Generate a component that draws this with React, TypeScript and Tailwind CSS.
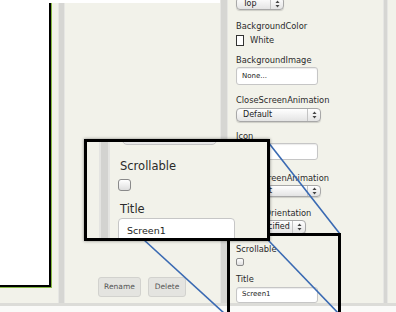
import React from "react";

const FONT = { fontFamily: '"DejaVu Sans", "Liberation Sans", sans-serif' };

function Arrows({ h = 8 }: { h?: number }) {
  return (
    <svg width="5" height={h} viewBox="0 0 5 8">
      <path d="M2.5 0.5 L4.5 3 L0.5 3 Z" fill="#444" />
      <path d="M2.5 7.5 L4.5 5 L0.5 5 Z" fill="#444" />
    </svg>
  );
}

function Dropdown({ w, label, h = 14, cls = "" }: { w: number; label: string; h?: number; cls?: string }) {
  return (
    <div
      className={`flex items-stretch rounded-[4px] border border-[#a8a8a8] bg-gradient-to-b from-white to-[#e4e4e4] shadow-[0_1px_1px_rgba(0,0,0,0.15)] ${cls}`}
      style={{ width: w, height: h }}
    >
      <div className="flex flex-1 items-center pl-[6px] text-[8px] leading-none text-[#222]">{label}</div>
      <div className="flex w-[13px] items-center justify-center border-l border-[#c4c4c4]">
        <Arrows />
      </div>
    </div>
  );
}

function Input({ text, h = 19, cls = "" }: { text: string; h?: number; cls?: string }) {
  return (
    <div
      className={`flex w-[82px] items-center rounded-[3px] border border-[#c6c6c6] bg-white pl-[5px] text-[7px] leading-none text-[#222] shadow-[inset_0_1px_1px_rgba(0,0,0,0.08)] ${cls}`}
      style={{ height: h }}
    >
      {text}
    </div>
  );
}

function Label({ children, cls = "" }: { children: React.ReactNode; cls?: string }) {
  return <div className={`h-[10px] text-[8.3px] leading-[10px] text-[#2a2a2a] ${cls}`}>{children}</div>;
}

function Stripe({ w }: { w: string }) {
  return <div className={`${w} shrink-0 border-x border-[#e6e6e3] bg-[#d6d6d3]`} />;
}

export default function App() {
  return (
    <div className="relative flex h-[312px] w-[396px] flex-col overflow-hidden bg-[#f2f2ea]" style={FONT}>
      <div className="flex h-[303px]">
        {/* left: viewer + components */}
        <div className="flex w-[220px] flex-col">
          <div className="h-[3px] bg-white" />
          <div className="flex flex-1">
            <div className="h-[285px] w-[52px] shrink-0 border-b border-r border-[#86b943]">
              <div className="h-full w-full border-b-2 border-r-2 border-black bg-white" />
            </div>
            <div className="w-[6px] shrink-0" />
            <Stripe w="w-[7px]" />
            <div className="flex flex-1 items-end gap-[7px] pb-[6px] pl-[33px]">
              <div className="flex h-[20px] w-[43px] items-center justify-center rounded-[3px] border border-[#d2d2ce] bg-[#e4e4e0] text-[7.5px] font-medium text-[#555]">
                Rename
              </div>
              <div className="flex h-[20px] w-[38px] items-center justify-center rounded-[3px] border border-[#d2d2ce] bg-[#e4e4e0] text-[7.5px] font-medium text-[#555]">
                Delete
              </div>
            </div>
          </div>
        </div>
        <Stripe w="w-[8px]" />
        {/* properties */}
        <div className="flex w-[155px] shrink-0 flex-col pl-[8px]">
          <Dropdown w={48} label="Top" cls="mt-[-3px]" />
          <Label cls="mt-[11px]">BackgroundColor</Label>
          <div className="mt-[3px] flex h-[12px] items-center gap-[6px]">
            <div className="h-[11px] w-[8px] border border-[#333] bg-white" />
            <span className="text-[8.3px] leading-none text-[#2a2a2a]">White</span>
          </div>
          <Label cls="mt-[9px]">BackgroundImage</Label>
          <Input text="None..." cls="mt-[2px]" />
          <Label cls="mt-[10px]">CloseScreenAnimation</Label>
          <Dropdown w={85} label="Default" cls="mt-[3px]" />
          <Label cls="mt-[9px]">Icon</Label>
          <Input text="" h={18} cls="mt-[2px]" />
          <Label cls="mt-[13px]">OpenScreenAnimation</Label>
          <Dropdown w={85} label="Default" h={13} cls="mt-[2px]" />
          <Label cls="mt-[11px]">ScreenOrientation</Label>
          <Dropdown w={70} label="Unspecified" cls="mt-[2px]" />
          <Label cls="mt-[10px]">Scrollable</Label>
          <div className="mt-[4px] h-[8px] w-[8px] rounded-[2px] border border-[#8a8a8a] bg-gradient-to-b from-white to-[#e0e0e0]" />
          <Label cls="mt-[8px]">Title</Label>
          <Input text="Screen1" h={17} cls="mt-[3px]" />
        </div>
        <Stripe w="w-[5px]" />
        <div className="flex-1" />
      </div>
      <div className="h-[9px] border-t-[3px] border-[#dcdcd8] bg-[#fafaf8]" />

      {/* zoom lines */}
      <svg className="pointer-events-none absolute left-0 top-0" width="396" height="312">
        <line x1="268" y1="142" x2="340" y2="234" stroke="#3a6ab3" strokeWidth="1.6" />
        <line x1="268" y1="240" x2="341" y2="316" stroke="#3a6ab3" strokeWidth="1.6" />
        <line x1="120" y1="218" x2="225" y2="314" stroke="#3a6ab3" strokeWidth="1.6" />
      </svg>

      {/* small frame */}
      <div className="absolute left-[227px] top-[233px] h-[90px] w-[114px] border-[3px] border-black" />

      {/* magnified frame */}
      <div className="absolute left-[84px] top-[139px] flex h-[102px] w-[186px] overflow-hidden border-[3px] border-black bg-[#f2f2ea] shadow-[0_0_3px_rgba(0,0,0,0.45)]">
        <div className="w-[12px] shrink-0" />
        <div className="w-[11px] shrink-0 border-x-2 border-[#e4e4e1] bg-[#d3d3d0]" />
        <div className="flex flex-1 flex-col pl-[8px]">
          <div className="ml-[4px] mt-[-10px] h-[13px] w-[95px] shrink-0 rounded-[5px] border border-[#c4c4c4] bg-gradient-to-b from-[#f4f4f4] to-[#e6e6e6]" />
          <div className="ml-[2px] mt-[14px] h-[14px] text-[11.5px] leading-[14px] text-[#2a2a2a]">Scrollable</div>
          <div className="mt-[6px] h-[12px] w-[13px] shrink-0 rounded-[3px] border border-[#8a8a8a] bg-gradient-to-b from-white to-[#dedede]" />
          <div className="ml-[2px] mt-[11px] h-[14px] text-[11.5px] leading-[14px] text-[#2a2a2a]">Title</div>
          <div className="mt-[2px] h-[30px] w-[117px] shrink-0 rounded-[4px] border border-[#c6c6c6] bg-white pl-[8px] pt-[6px] text-[9.5px] leading-[12px] text-[#222]">
            Screen1
          </div>
        </div>
      </div>
    </div>
  );
}
